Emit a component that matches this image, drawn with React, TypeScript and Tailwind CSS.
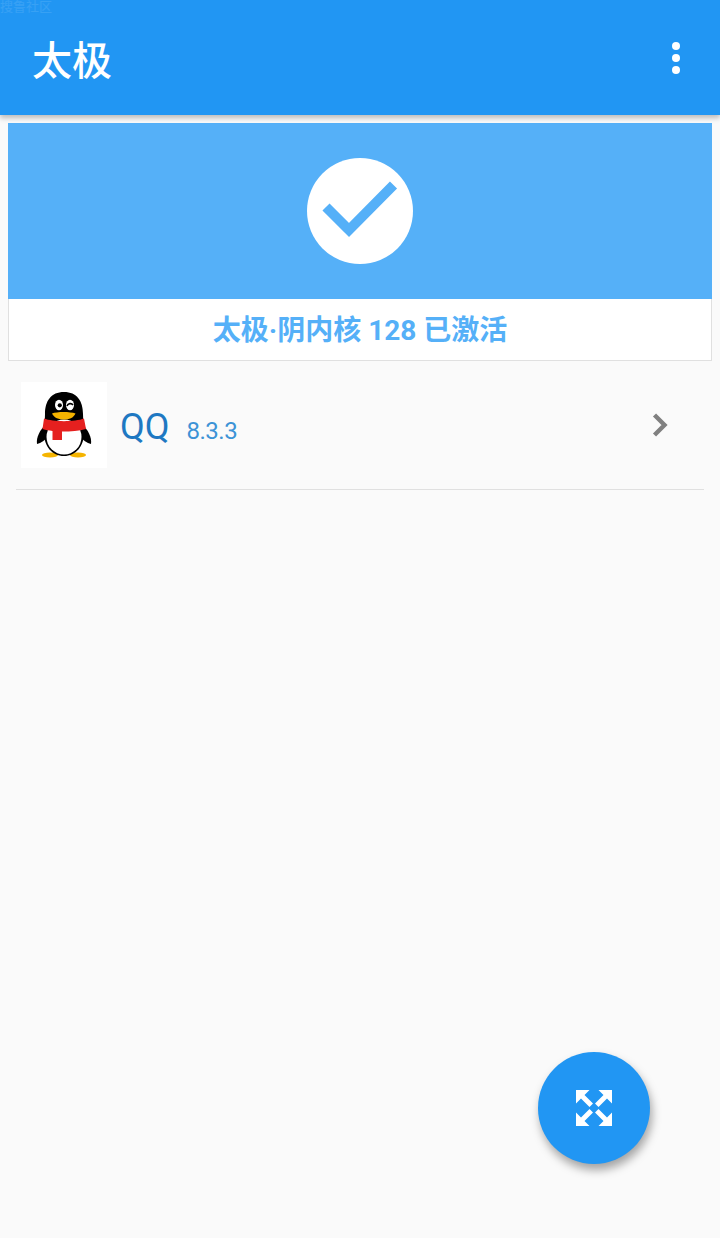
const penguin = (
  <svg viewBox="0 0 86 86" width={86} height={86}>
    {/* feet */}
    <ellipse cx="29" cy="73" rx="8" ry="2.6" fill="#f5b400" />
    <ellipse cx="57" cy="73" rx="8" ry="2.6" fill="#f5b400" />
    {/* flippers */}
    <path d="M25 42 C19 48 15 55 16 62 C20 61 24 58 28 54 Z" fill="#000" />
    <path d="M61 42 C67 48 71 55 70 62 C66 61 62 58 58 54 Z" fill="#000" />
    {/* body */}
    <path d="M43 10 C30 10 24 19 24 32 C24 38 23 44 23 51 C23 64 31 74 43 74 C55 74 63 64 63 51 C63 44 62 38 62 32 C62 19 56 10 43 10 Z" fill="#000" />
    <ellipse cx="43" cy="55" rx="17.5" ry="17.5" fill="#fff" />
    {/* scarf */}
    <path d="M23 36.5 C32 40 54 40 63 36.5 L65 47 C58 49 50 49.5 41 49.5 L41 58 L31.5 58 L31.5 49 C28 48.5 25 48 21.5 47 Z" fill="#e5201f" />
    {/* eyes */}
    <ellipse cx="38" cy="23" rx="4" ry="5.2" fill="#fff" />
    <circle cx="38.8" cy="23.3" r="2.1" fill="#000" />
    <ellipse cx="49" cy="23" rx="4" ry="5.2" fill="#fff" />
    <path d="M46 24 C47 21.2 50.5 20.8 52 23" stroke="#000" strokeWidth="1.6" fill="none" />
    {/* beak */}
    <path d="M31 31.5 C36 29.5 49 29.5 54.5 31.5 C52.5 36 48 37.5 43 37.5 C38 37.5 33 36 31 31.5 Z" fill="#f5b400" />
  </svg>
);

export default function App() {
  return (
    <div className="relative h-[1238px] w-[720px] overflow-hidden bg-[#fafafa] font-['Roboto','Noto_Sans_CJK_SC',sans-serif]">
      <span className="absolute left-0 top-0 z-20 text-[13px] leading-[13px] text-white/10">搜鲁社区</span>

      <header className="relative z-10 flex h-[115px] items-center justify-between bg-[#2196f3] pl-[32px] pr-[40px] shadow-[0_3px_5px_rgba(0,0,0,0.25)]">
        <h1 className="mt-2 text-[40px] font-medium leading-none text-white">太极</h1>
        <div className="flex flex-col gap-[4px]">
          <span className="h-2 w-2 rounded-full bg-white" />
          <span className="h-2 w-2 rounded-full bg-white" />
          <span className="h-2 w-2 rounded-full bg-white" />
        </div>
      </header>

      <section className="mx-2 mt-2 border-x border-b border-[#e0e0e0] bg-white">
        <div className="-mx-px flex h-[176px] items-center justify-center bg-[#55b0f8]">
          <div className="flex h-[106px] w-[106px] items-center justify-center rounded-full bg-white">
            <svg width="106" height="106" viewBox="0 0 106 106">
              <path d="M19 49 L42 72 L86.5 27" fill="none" stroke="#55b0f8" strokeWidth="10" />
            </svg>
          </div>
        </div>
        <p className="flex h-[61px] items-center justify-center pt-[3px] text-[28px] font-bold text-[#55b0f8]">太极·阴内核 128 已激活</p>
      </section>

      <div className="mx-4 mt-[21px] flex h-[108px] items-start border-b border-[#e0e0e0] pl-[5px] pr-[35px]">
        <div className="h-[86px] w-[86px] shrink-0 bg-white">{penguin}</div>
        <div className="ml-[13px] mt-[23px] flex items-baseline">
          <span className="text-[36px] leading-[44px] text-[#1e78c2]">QQ</span>
          <span className="ml-[17px] text-[24px] tracking-[-0.5px] text-[#3d93d6]">8.3.3</span>
        </div>
        <svg className="ml-auto mt-[30px]" width="18" height="26" viewBox="0 0 18 26">
          <path d="M3.5 3 L13.5 13 L3.5 23" fill="none" stroke="#808080" strokeWidth="4.4" />
        </svg>
      </div>

      <button className="absolute left-[538px] top-[1052px] flex h-28 w-28 items-center justify-center rounded-full bg-[#2196f3] shadow-[2px_6px_10px_rgba(0,0,0,0.35)]">
        <svg width="36" height="36" viewBox="0 0 36 36" fill="#fff">
          <path d="M0 0 H13.5 L8.5 5 L17 13.5 L13.5 17 L5 8.5 L0 13.5 Z" />
          <path d="M36 0 H22.5 L27.5 5 L19 13.5 L22.5 17 L31 8.5 L36 13.5 Z" />
          <path d="M0 36 H13.5 L8.5 31 L17 22.5 L13.5 19 L5 27.5 L0 22.5 Z" />
          <path d="M36 36 H22.5 L27.5 31 L19 22.5 L22.5 19 L31 27.5 L36 22.5 Z" />
        </svg>
      </button>
    </div>
  );
}
